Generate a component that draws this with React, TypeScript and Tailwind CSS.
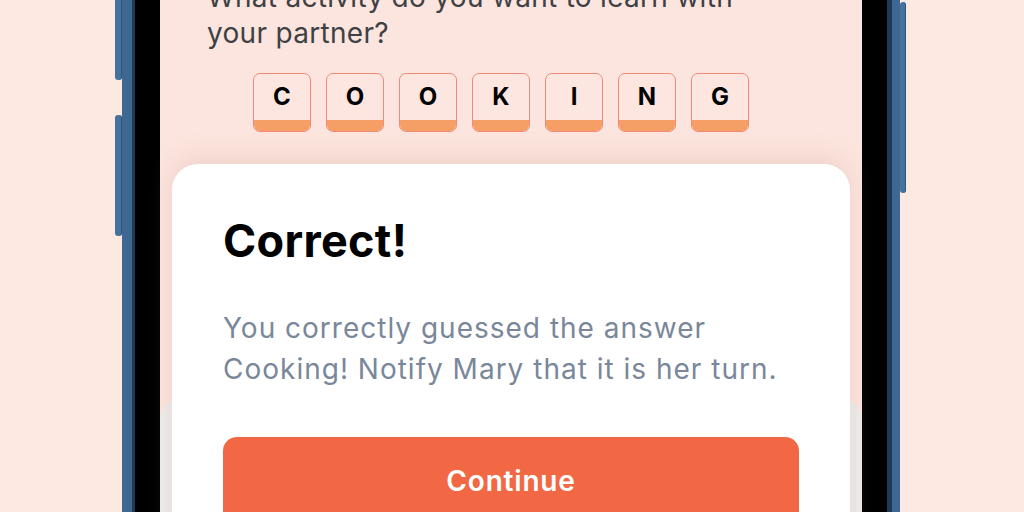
import React from "react";

const letters = ["C", "O", "O", "K", "I", "N", "G"];

function Tile({ ch }: { ch: string }) {
  return (
    <div className="w-[58px] h-[59px] rounded-[7px] border-[1.5px] border-[#f28a78] overflow-hidden flex flex-col bg-[#fde6df]">
      <div className="flex-1 flex items-center justify-center text-[24px] font-bold text-black leading-none">
        {ch}
      </div>
      <div className="h-[11px] bg-[#f59e66]" />
    </div>
  );
}

export default function App() {
  return (
    <div
      className="w-[1024px] h-[512px] overflow-hidden bg-[#fde8e2] flex"
      style={{ fontFamily: "Inter, 'Noto Sans', sans-serif" }}
    >
      {/* left page margin */}
      <div className="w-[115px] shrink-0" />
      {/* left side buttons */}
      <div className="w-[7px] shrink-0 flex flex-col">
        <div className="h-[90px] mt-[-10px] rounded-b-[3px] bg-[#46729e] border-r border-[#2e5478]" />
        <div className="h-[121px] mt-[35px] rounded-[3px] bg-[#46729e] border-r border-[#2e5478]" />
      </div>
      {/* left frame */}
      <div className="w-[10px] shrink-0 bg-[#3e6892]" />
      <div className="w-[3px] shrink-0 bg-[#1d3a56]" />
      <div className="w-[25px] shrink-0 bg-black" />
      {/* screen */}
      <div className="w-[702px] shrink-0 bg-[#fce5de] relative flex flex-col">
        <div className="pl-[47px] pr-[110px] mt-[-21px] text-[28px] leading-[36px] text-[#3e4144] tracking-[0.3px]">
          What activity do you want to learn with your partner?
        </div>
        <div className="flex gap-[15px] pl-[93px] mt-[22px]">
          {letters.map((c, i) => (
            <Tile key={i} ch={c} />
          ))}
        </div>
        <div className="relative mt-[32px] px-[12px]">
          <div className="absolute left-0 right-0 top-[234px] h-[200px] rounded-t-[22px] bg-[#ededed]" />
          <div className="relative bg-white rounded-[26px] pt-[50px] px-[51px] pb-[40px] shadow-[0_-6px_24px_rgba(200,150,140,0.25)]">
            <div className="text-[45px] leading-[1.2] font-bold text-black tracking-[0.3px]">Correct!</div>
            <div className="mt-[40px] text-[28px] leading-[41px] text-[#7a879a] tracking-[1px] whitespace-nowrap">
              You correctly guessed the answer
              <br />
              Cooking! Notify Mary that it is her turn.
            </div>
            <div className="mt-[47px] h-[88px] rounded-[14px] bg-[#f26844] flex items-center justify-center text-white text-[28px] font-semibold tracking-[0.8px]">
              Continue
            </div>
          </div>
        </div>
      </div>
      {/* right frame */}
      <div className="w-[25px] shrink-0 bg-black" />
      <div className="w-[5px] shrink-0 bg-[#1d3a56]" />
      <div className="w-[8px] shrink-0 bg-[#3e6892]" />
      <div className="w-[6px] shrink-0 flex flex-col">
        <div className="h-[191px] mt-[2px] rounded-[3px] bg-[#46729e] border-r border-[#2e5478]" />
      </div>
    </div>
  );
}
